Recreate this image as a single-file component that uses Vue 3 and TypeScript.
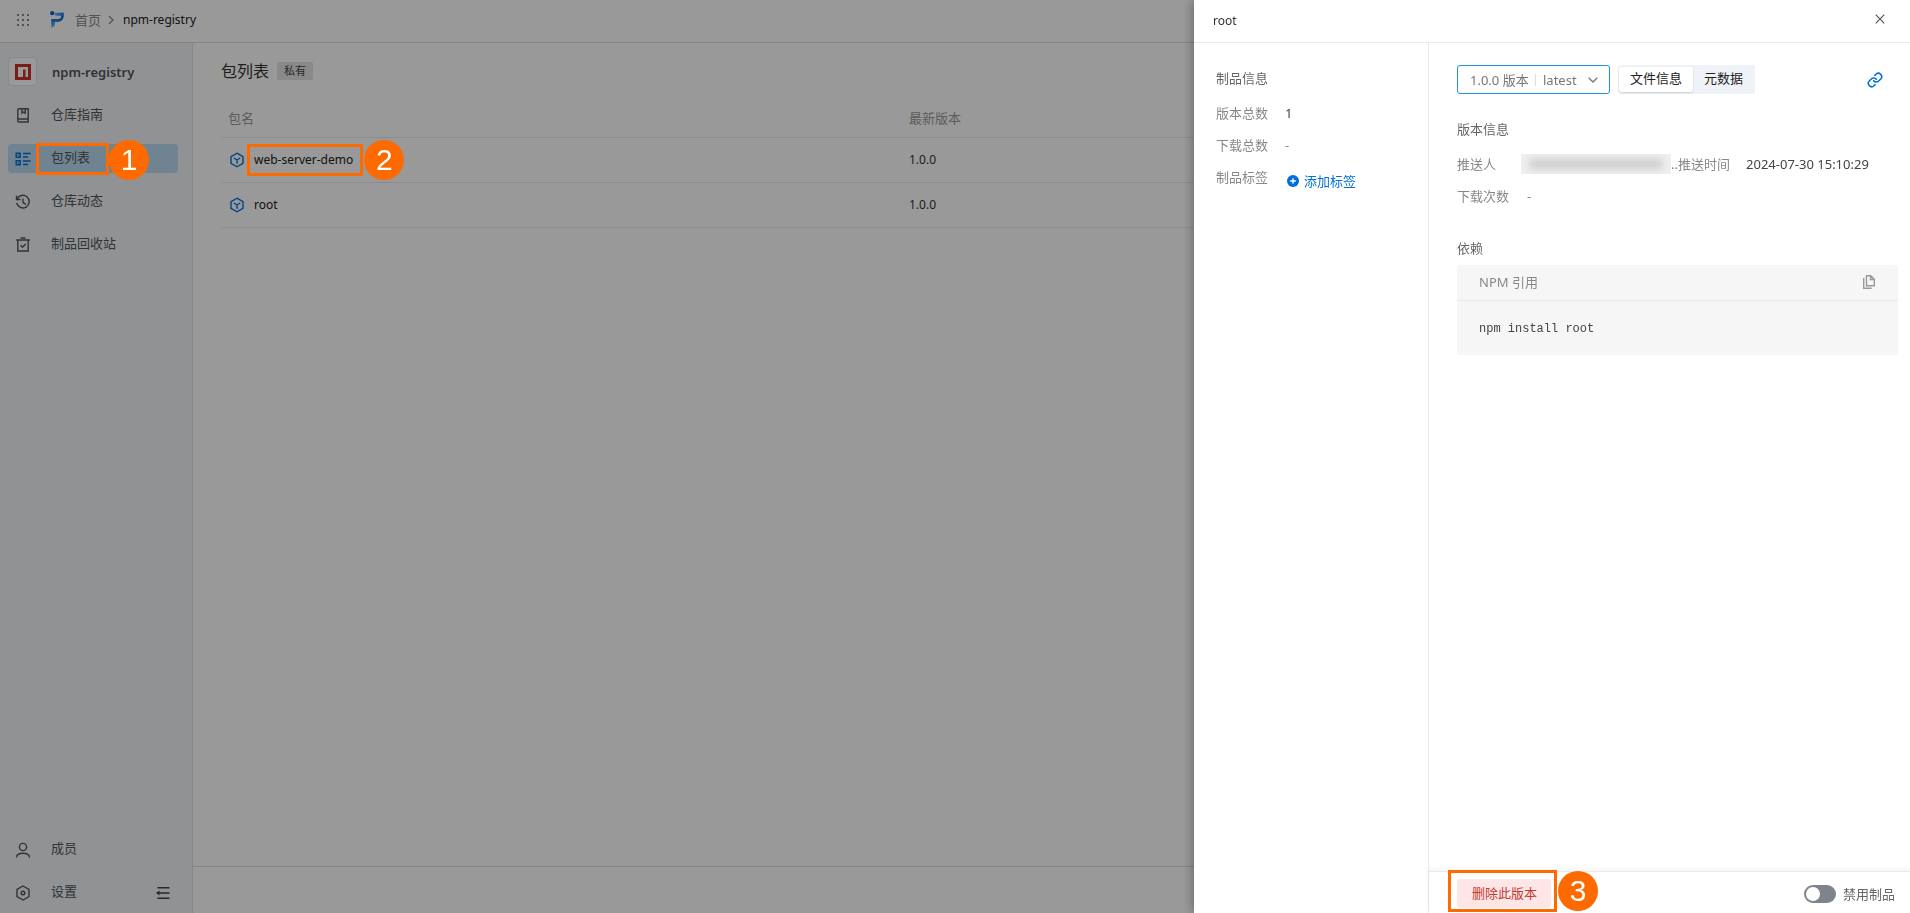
<script setup lang="ts">
import { ref } from 'vue'

interface NavItem {
  id: string
  label: string
}

interface Pkg {
  name: string
  version: string
  marker?: number
}

const navItems: NavItem[] = [
  { id: 'guide', label: '仓库指南' },
  { id: 'packages', label: '包列表' },
  { id: 'activity', label: '仓库动态' },
  { id: 'trash', label: '制品回收站' },
]

const packages: Pkg[] = [
  { name: 'web-server-demo', version: '1.0.0', marker: 2 },
  { name: 'root', version: '1.0.0' },
]

const activeNav = ref('packages')
const activeTab = ref('file')
const version = ref('1.0.0')
const disabled = ref(false)
</script>

<template>
  <div class="app">
    <header class="topbar">
      <button class="icon-btn apps" aria-label="应用">
        <svg width="14" height="14" viewBox="0 0 14 14" fill="#8b8b8b">
          <template v-for="r in 3" :key="r">
            <rect v-for="c in 3" :key="c" :x="(c - 1) * 5 + 1" :y="(r - 1) * 5 + 1" width="2" height="2" />
          </template>
        </svg>
      </button>
      <svg class="brand" width="14" height="17" viewBox="0 0 14 17">
        <defs>
          <linearGradient id="brandStem" x1="0" y1="0" x2="0" y2="1">
            <stop offset="0" stop-color="#1c6fd4" />
            <stop offset="1" stop-color="#8cc4f6" />
          </linearGradient>
          <linearGradient id="brandBowl" x1="0" y1="0" x2="1" y2="1">
            <stop offset="0" stop-color="#8cc4f6" />
            <stop offset="0.6" stop-color="#1b78e0" />
            <stop offset="1" stop-color="#0f62c8" />
          </linearGradient>
        </defs>
        <circle cx="2.200" cy="2.200" r="2.100" fill="#0d5fd0" />
        <path d="M4.500 1.200C7 2.600 10 .8 13.500 1.600c.6 2.400.5 5-1 6.900-1.500 1.900-3.500 2.400-6 2.400V8c2 0 3.600-.3 4.200-1.300.4-.7.400-1.500.2-2.200C8.500 4.900 6 5 4.300 4c.6-.9.700-1.900.2-2.800z" fill="url(#brandBowl)" />
        <path d="M1.200 8h6v2.900H4.800V15l-3.600 2z" fill="url(#brandStem)" />
      </svg>
      <nav class="crumbs" aria-label="面包屑">
        <a href="#home">首页</a>
        <svg width="6" height="10" viewBox="0 0 6 10" fill="none" stroke="#8a8a8a" stroke-width="1.3"><path d="M1 1l4 4-4 4" /></svg>
        <span class="current">npm-registry</span>
      </nav>
    </header>

    <div class="body">
      <aside class="sidebar">
        <div class="repo">
          <span class="repo-logo">
            <svg width="16" height="16" viewBox="0 0 16 16"><rect width="16" height="16" fill="#cb3027" /><path d="M3 3h10v10h-2.500V5.500H8V13H3z" fill="#fff" /></svg>
          </span>
          <strong>npm-registry</strong>
        </div>
        <nav class="nav">
          <a v-for="n in navItems" :key="n.id" :href="'#' + n.id" class="nav-item" :class="{ active: n.id === activeNav }" @click.prevent="activeNav = n.id">
            <svg v-if="n.id === 'guide'" width="12" height="15" viewBox="0 0 12 15" fill="none" stroke="currentColor" stroke-width="1.400"><path d="M1.700.8h9.500v13.200H2A1.200 1.200 0 0 1 .8 12.800V1.700A.9.9 0 0 1 1.700.8zM1 11h10M5 1v4.200l1.600-1.200 1.600 1.200V1" /></svg>
            <svg v-else-if="n.id === 'packages'" width="16" height="14" viewBox="0 0 16 14" fill="none" stroke="currentColor" stroke-width="1.400"><path d="M1.200 1.200h4v4h-4zM1.200 8.700h4v4h-4zM8 1.500h7.500M8 5h5M8 9h7.500M8 12.500h5" /><path d="M2.800 3.200h1M2.800 10.700h1" /></svg>
            <svg v-else-if="n.id === 'activity'" width="16" height="16" viewBox="0 0 16 16" fill="none" stroke="currentColor" stroke-width="1.400"><path d="M1.500 1.500v4h4M2 5.300A6.300 6.300 0 1 1 1.700 9M8 4.500v4l2.800 1.800" /></svg>
            <svg v-else width="14" height="15" viewBox="0 0 14 15" fill="none" stroke="currentColor" stroke-width="1.400"><path d="M.2 3h13.600M1.800 3v11h10.400V3M4.600 1h4.800M4.500 8.300l2 2 3.200-3.400" /></svg>
            <span>{{ n.label }}</span>
            <i v-if="n.id === 'packages'" class="frame frame-nav"></i>
            <b v-if="n.id === 'packages'" class="badge badge-nav">1</b>
          </a>
        </nav>
        <div class="side-foot">
          <a href="#members" class="nav-item">
            <svg width="16" height="16" viewBox="0 0 16 16" fill="none" stroke="currentColor" stroke-width="1.400"><circle cx="8" cy="5" r="3.600" /><path d="M1.500 15.500c0-3 2.500-4.300 6.500-4.300s6.500 1.300 6.500 4.300" /></svg>
            <span>成员</span>
          </a>
          <div class="settings-row">
            <a href="#settings" class="nav-item">
              <svg width="16" height="16" viewBox="0 0 16 16" fill="none" stroke="currentColor" stroke-width="1.400"><path d="M8 1l6 3.500v7L8 15l-6-3.500v-7z" /><circle cx="8" cy="8" r="1.800" /></svg>
              <span>设置</span>
            </a>
            <button class="icon-btn" aria-label="收起侧栏">
              <svg width="14" height="14" viewBox="0 0 14 14" fill="none" stroke="#444" stroke-width="1.400"><path d="M1.500 1.700h12M2 7h11.500M1.500 12.300h12" /><path d="M0 7l3.500-2.600v5.200z" fill="#444" stroke="none" /></svg>
            </button>
          </div>
        </div>
      </aside>

      <main class="main">
        <div class="content">
          <div class="heading">
            <h1>包列表</h1>
            <span class="tag">私有</span>
          </div>
          <table class="list">
            <thead>
              <tr><th>包名</th><th>最新版本</th></tr>
            </thead>
            <tbody>
              <tr v-for="p in packages" :key="p.name">
                <td>
                  <a href="#package" class="pkg">
                    <svg width="14" height="16" viewBox="0 0 14 16" fill="none" stroke="#0070d8" stroke-width="1.400"><path d="M7 1.200l6 3.400v6.800l-6 3.400-6-3.400V4.600zM3.800 6L7 8l3.200-2M7 8v3.800" /></svg>
                    <span class="pkg-name">{{ p.name }}
                      <i v-if="p.marker" class="frame frame-pkg"></i>
                      <b v-if="p.marker" class="badge badge-pkg">{{ p.marker }}</b>
                    </span>
                  </a>
                </td>
                <td>{{ p.version }}</td>
              </tr>
            </tbody>
          </table>
        </div>
        <footer class="main-foot"></footer>
      </main>
    </div>

    <div class="mask"></div>

    <section class="drawer" role="dialog" aria-label="root">
      <header class="drawer-head">
        <h2>root</h2>
        <button class="icon-btn" aria-label="关闭">
          <svg width="10" height="10" viewBox="0 0 10 10" fill="none" stroke="#555" stroke-width="1.200"><path d="M.7.7l8.600 8.600M9.300.7L.7 9.300" /></svg>
        </button>
      </header>
      <div class="drawer-body">
        <div class="meta">
          <h3>制品信息</h3>
          <dl>
            <dt>版本总数</dt><dd class="num">1</dd>
            <dt>下载总数</dt><dd>-</dd>
            <dt>制品标签</dt>
            <dd>
              <button class="add">
                <svg width="12" height="12" viewBox="0 0 12 12"><circle cx="6" cy="6" r="6" fill="#0070d8" /><path d="M6 3.200v5.600M3.200 6h5.600" stroke="#fff" stroke-width="1.300" /></svg>
                添加标签
              </button>
            </dd>
          </dl>
        </div>
        <div class="detail">
          <div class="detail-main">
            <div class="tools">
              <div class="picker">
                <select v-model="version" aria-label="版本">
                  <option value="1.0.0">1.0.0 版本</option>
                </select>
                <span class="picker-tag">latest</span>
                <svg width="10" height="6" viewBox="0 0 10 6" fill="none" stroke="#777" stroke-width="1.300"><path d="M.7.7L5 5 9.300.7" /></svg>
              </div>
              <div class="tabs" role="tablist">
                <button role="tab" :aria-selected="activeTab === 'file'" :class="{ on: activeTab === 'file' }" @click="activeTab = 'file'">文件信息</button>
                <button role="tab" :aria-selected="activeTab === 'meta'" :class="{ on: activeTab === 'meta' }" @click="activeTab = 'meta'">元数据</button>
              </div>
              <button class="icon-btn link" aria-label="复制链接">
                <svg width="16" height="16" viewBox="0 0 24 24" fill="none" stroke="#0070d8" stroke-width="2.300" stroke-linecap="round"><path d="M10 13a5 5 0 0 0 7.540.54l3-3a5 5 0 0 0-7.070-7.070l-1.720 1.710" /><path d="M14 11a5 5 0 0 0-7.540-.54l-3 3a5 5 0 0 0 7.070 7.070l1.710-1.710" /></svg>
              </button>
            </div>
            <h3>版本信息</h3>
            <dl class="facts">
              <div class="fact">
                <dt>推送人</dt>
                <dd class="pusher"><span class="redacted"><i></i></span>..</dd>
                <dt>推送时间</dt>
                <dd class="num">2024-07-30 15:10:29</dd>
              </div>
              <div class="fact"><dt>下载次数</dt><dd>-</dd></div>
            </dl>
            <h3>依赖</h3>
            <div class="code-card">
              <div class="code-head">
                <span>NPM 引用</span>
                <button class="icon-btn" aria-label="复制">
                  <svg width="12" height="14" viewBox="0 0 12 14" fill="none" stroke="#999" stroke-width="1.400"><path d="M3.500.7h4.300l3.500 3.500v6.500H3.500zM7.500 1v3.500H11M.7 3v10.300h8" /></svg>
                </button>
              </div>
              <pre><code>npm install root</code></pre>
            </div>
          </div>
          <footer class="drawer-foot">
            <button class="delete">删除此版本
              <i class="frame frame-delete"></i>
              <b class="badge badge-delete">3</b>
            </button>
            <label class="switch">
              <input v-model="disabled" type="checkbox" role="switch" />
              禁用制品
            </label>
          </footer>
        </div>
      </div>
    </section>
  </div>
</template>

<style>
body {
  margin: 0;
}
</style>

<style scoped>
.app {
  --line: #e8eaec;
  --orange: #ff6a00;
  min-height: 100vh;
  display: flex;
  flex-direction: column;
  background: #fff;
  color: #333;
  font: 13px/20px "Noto Sans", "Noto Sans CJK SC", sans-serif;
}
*,
*::before {
  box-sizing: border-box;
}
a {
  color: inherit;
  text-decoration: none;
}
button,
select {
  font: inherit;
  color: inherit;
  border: 0;
  background: none;
  padding: 0;
  cursor: pointer;
}
h1,
h2,
h3,
dl,
dd,
pre {
  margin: 0;
  font-weight: 400;
}
svg {
  flex: none;
  display: block;
}
.icon-btn {
  display: grid;
  place-items: center;
}

/* top bar */
.topbar {
  height: 43px;
  display: flex;
  align-items: center;
  padding: 0 16px 3px;
  border-bottom: 1px solid #d9dbdd;
}
.brand {
  margin-left: 20px;
}
.crumbs {
  display: flex;
  align-items: center;
  margin-left: 11px;
  gap: 7px;
  color: #888;
}
.current {
  color: #222;
  margin-left: 2px;
  font-size: 12px;
}

/* side bar */
.body {
  flex: 1;
  display: flex;
}
.sidebar {
  width: 193px;
  flex: none;
  display: flex;
  flex-direction: column;
  padding: 14px 14px 6px 8px;
  background: #f0f3f7;
  border-right: 1px solid #dfe2e5;
  color: #555;
}
.repo {
  display: flex;
  align-items: center;
  gap: 15px;
  height: 29px;
}
.repo strong {
  font-size: 13px;
  font-weight: 600;
}
.repo-logo {
  width: 29px;
  height: 29px;
  display: grid;
  place-items: center;
  background: #fff;
  border: 1px solid #e2e5e8;
  border-radius: 4px;
}
.nav {
  display: grid;
  gap: 14px;
  margin-top: 15px;
}
.nav-item {
  position: relative;
  display: grid;
  grid-template-columns: 29px auto;
  column-gap: 14px;
  justify-content: start;
  align-items: center;
  height: 29px;
  border-radius: 4px;
}
.nav-item > svg {
  justify-self: center;
}
.nav-item > span {
  padding-bottom: 3px;
}
.nav-item.active {
  background: #b9dbf1;
}
.nav-item.active > svg {
  color: #0070d8;
}
.side-foot {
  margin-top: auto;
  display: grid;
  gap: 14px;
}
.settings-row {
  display: flex;
  justify-content: space-between;
  padding-right: 8px;
}

/* package list */
.main {
  flex: 1;
  min-width: 0;
  display: flex;
  flex-direction: column;
}
.content {
  flex: 1;
  padding: 16px 28px;
}
.heading {
  display: flex;
  align-items: center;
  gap: 8px;
  height: 24px;
}
.heading h1 {
  font-size: 16px;
}
.tag {
  padding: 0 7px;
  background: #e4e4e4;
  border-radius: 2px;
  font-size: 11px;
  line-height: 18px;
  color: #444;
}
.list {
  width: 100%;
  margin-top: 16px;
  border-collapse: collapse;
  table-layout: fixed;
}
.list th,
.list td {
  height: 45px;
  padding: 0 7px;
  text-align: left;
  font-weight: 400;
  border-bottom: 1px solid var(--line);
}
.list td {
  font-size: 12px;
}
.list th {
  height: 38px;
  color: #999;
}
.list th:first-child {
  width: 41%;
}
.pkg {
  display: flex;
  align-items: center;
  gap: 10px;
  padding-left: 2px;
}
.pkg-name {
  position: relative;
  color: #222;
}
.main-foot {
  height: 47px;
  border-top: 1px solid #d9dbdd;
}

/* drawer */
.mask {
  position: fixed;
  inset: 0;
  z-index: 10;
  background: rgba(0, 0, 0, 0.4);
}
.drawer {
  position: fixed;
  inset: 0 0 0 auto;
  z-index: 20;
  width: 716px;
  display: flex;
  flex-direction: column;
  background: #fff;
  box-shadow: -2px 0 10px rgba(0, 0, 0, 0.3);
}
.drawer-head {
  height: 43px;
  display: flex;
  align-items: center;
  justify-content: space-between;
  padding: 0 25px 0 19px;
  border-bottom: 1px solid var(--line);
}
.drawer-head h2 {
  font-size: 12px;
}
.drawer-head .icon-btn {
  margin-bottom: 4px;
}
.drawer-body {
  flex: 1;
  display: flex;
  min-height: 0;
}
.meta {
  width: 235px;
  flex: none;
  padding: 25px 22px;
  border-right: 1px solid var(--line);
}
h3 {
  font-size: 13px;
  color: #666;
}
dt {
  color: #888;
}
dd {
  color: #888;
}
dd.num {
  color: #444;
}
.meta dl {
  display: grid;
  grid-template-columns: 69px auto;
  row-gap: 12px;
  margin-top: 15px;
}
.add {
  display: flex;
  align-items: center;
  gap: 5px;
  margin: 4px 0 0 2px;
  color: #0070d8;
}
.detail {
  flex: 1;
  display: flex;
  flex-direction: column;
}
.detail-main {
  flex: 1;
  padding: 22px 12px 0 28px;
}
.tools {
  display: flex;
  height: 29px;
  margin-bottom: 25px;
}
.picker {
  display: grid;
  grid-template-columns: 77px 1fr auto;
  align-items: center;
  width: 153px;
  border: 1px solid #1f93e6;
  border-radius: 3px;
  color: #777;
}
.picker > * {
  grid-row: 1;
  pointer-events: none;
}
.picker select {
  grid-column: 1 / -1;
  width: 100%;
  height: 27px;
  padding-left: 12px;
  appearance: none;
  outline: 0;
  pointer-events: auto;
}
.picker-tag {
  grid-column: 2;
  padding-left: 7px;
  border-left: 1px solid #ddd;
  line-height: 12px;
}
.picker svg {
  grid-column: 3;
  margin-right: 11px;
}
.tabs {
  display: flex;
  margin-left: 8px;
  padding: 2px 1px;
  background: #eff3f7;
  border-radius: 3px;
  color: #222;
}
.tabs button {
  padding: 0 11px 3px;
  border-radius: 3px;
  line-height: 22px;
}
.tabs .on {
  background: #fff;
  box-shadow: 0 1px 2px rgba(0, 0, 0, 0.15);
}
.link {
  margin: 0 15px 0 auto;
}
.facts {
  display: grid;
  gap: 12px;
  margin: 15px 0 32px;
}
.fact {
  display: flex;
}
.fact dt:first-child {
  width: 64px;
}
.fact:last-child dd {
  padding-left: 6px;
}
.pusher {
  display: flex;
  width: 157px;
}
.redacted {
  width: 150px;
  height: 20px;
  background: #f0f0f0;
  overflow: hidden;
}
.redacted i {
  display: block;
  height: 8px;
  margin: 6px 8px;
  background: #c4c4c4;
  filter: blur(4px);
}
.fact .num {
  margin-left: 16px;
}
.code-card {
  margin-top: 7px;
  background: #f6f6f6;
  border-radius: 4px;
}
.code-head {
  display: flex;
  align-items: center;
  justify-content: space-between;
  height: 36px;
  padding: 0 23px 2px 22px;
  border-bottom: 1px solid #e8e8e8;
  color: #888;
}
pre {
  padding: 17px 22px 16px;
}
code {
  font: 12px/20px "Liberation Mono", monospace;
  color: #444;
}
.drawer-foot {
  display: flex;
  align-items: center;
  justify-content: space-between;
  height: 42px;
  padding: 2px 15px 0 28px;
  border-top: 1px solid var(--line);
  box-shadow: 0 -2px 6px rgba(0, 0, 0, 0.05);
}
.delete {
  position: relative;
  height: 29px;
  padding: 0 14px 2px 15px;
  border-radius: 3px;
  background: #ffe6e6;
  color: #c63a32;
}
.switch {
  display: flex;
  align-items: center;
  gap: 7px;
  color: #666;
}
.switch input {
  appearance: none;
  width: 32px;
  height: 18px;
  margin: 0;
  border-radius: 9px;
  background: #7f848c;
}
.switch input::before {
  content: "";
  display: block;
  width: 14px;
  height: 14px;
  margin: 2px;
  border-radius: 50%;
  background: #fff;
}
.switch input:checked {
  background: #0070d8;
}
.switch input:checked::before {
  margin-left: 16px;
}

/* step markers */
.frame {
  position: absolute;
  z-index: 15;
  border: 3px solid var(--orange);
}
.badge {
  position: absolute;
  z-index: 15;
  width: 40px;
  height: 40px;
  border-radius: 50%;
  background: var(--orange);
  color: #fff;
  font: 30px/40px "Liberation Sans", sans-serif;
  text-align: center;
}
.frame-nav {
  left: 28px;
  top: -1px;
  width: 73px;
  height: 32px;
}
.badge-nav {
  left: 101px;
  top: -4px;
}
.frame-pkg {
  inset: -6px -10px -6px -7px;
}
.badge-pkg {
  left: calc(100% + 11px);
  top: -10px;
}
.frame-delete {
  inset: -9px -6px -4px -9px;
}
.badge-delete {
  left: calc(100% + 7px);
  top: -8px;
}
</style>
